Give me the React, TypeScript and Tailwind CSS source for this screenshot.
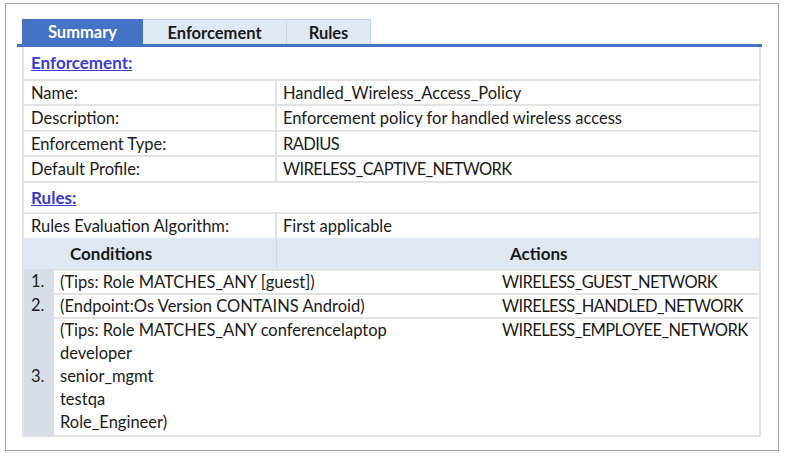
const font = { fontFamily: '"Lato", "Open Sans", sans-serif' };

const details = [
    ["Name:", "Handled_Wireless_Access_Policy"],
    ["Description:", "Enforcement policy for handled wireless access"],
    ["Enforcement Type:", "RADIUS"],
    ["Default Profile:", "WIRELESS_CAPTIVE_NETWORK"],
];

const rules = [
    { n: "1.", cond: ["(Tips: Role MATCHES_ANY [guest])"], action: "WIRELESS_GUEST_NETWORK", h: "h-[24px]" },
    { n: "2.", cond: ["(Endpoint:Os Version CONTAINS Android)"], action: "WIRELESS_HANDLED_NETWORK", h: "h-[24px]" },
    {
        n: "3.",
        cond: ["(Tips: Role MATCHES_ANY conferencelaptop", "developer", "senior_mgmt", "testqa", "Role_Engineer)"],
        action: "WIRELESS_EMPLOYEE_NETWORK",
        h: "h-[118px]",
    },
];

// caps in Lato run wider than the original font, so squeeze them a bit
const caps = (s: string) => (s === s.toUpperCase() ? "tracking-[-0.6px]" : "");

function KeyRow({ label, value, h }: { label: string; value: string; h: string }) {
    return (
        <div className={`grid grid-cols-[253px_1fr] border-t-2 border-[#e2e2e2] ${h}`}>
            <div className="flex items-center pl-[7px] border-r-2 border-[#e2e2e2]">{label}</div>
            <div className={`flex items-center pl-[6px] ${caps(value)}`}>{value}</div>
        </div>
    );
}

export default function App() {
    return (
        <div className="w-[787px] h-[461px] bg-white pt-[3px] pl-[5px] text-[16.5px] text-[#1a1a1a]" style={font}>
            <div className="w-[774px] h-[448px] border border-[#a3a3a3] pt-[15px] pl-[11px]">
                <div className="flex ml-[5px] h-[25px] font-bold">
                    <div className="w-[121px] bg-[#4472c4] text-white flex items-center justify-center pt-[2px]">Summary</div>
                    <div className="w-[144px] bg-[#dfe9f5] border-t border-r border-[#c7d3e3] flex items-center justify-center pt-[2px]">Enforcement</div>
                    <div className="w-[84px] bg-[#dfe9f5] border-t border-r border-[#c7d3e3] flex items-center justify-center pt-[2px]">Rules</div>
                </div>
                <div className="w-[745px] h-[3px] bg-[#4472c4]" />
                <div className="ml-[5px] w-[739px] border-l-2 border-r-2 border-b-2 border-[#e2e2e2]">
                    <div className="h-[32px] flex items-center pl-[7px]">
                        <span className="text-[17px] font-bold text-[#3a3ad4] underline">Enforcement:</span>
                    </div>
                    {details.map(([label, value], i) => (
                        <KeyRow key={label} label={label} value={value} h={i % 2 === 0 ? "h-[25px]" : "h-[26px]"} />
                    ))}
                    <div className="h-[31px] flex items-center pl-[7px] border-t-2 border-[#e2e2e2]">
                        <span className="text-[17px] font-bold text-[#3a3ad4] underline">Rules:</span>
                    </div>
                    <KeyRow label="Rules Evaluation Algorithm:" value="First applicable" h="h-[26px]" />
                    <div className="grid grid-cols-[253px_1fr] h-[31px] bg-[#dfe8f2] font-bold text-[17px]">
                        <div className="flex items-center pl-[46px] border-r border-[#cfd8e3]">Conditions</div>
                        <div className="flex items-center pl-[233px]">Actions</div>
                    </div>
                    {rules.map((r) => (
                        <div key={r.n} className={`flex ${r.h}`}>
                            <div className="w-[30px] shrink-0 bg-[#d7dee8] flex items-center pl-[7px]">{r.n}</div>
                            <div className="flex-1 grid grid-cols-[448px_1fr] border-t-2 border-[#e2e2e2]">
                                <div className="pl-[6px] leading-[23px]">
                                    {r.cond.map((c) => (
                                        <div key={c}>{c}</div>
                                    ))}
                                </div>
                                <div className="leading-[23px] tracking-[-0.6px]">{r.action}</div>
                            </div>
                        </div>
                    ))}
                </div>
            </div>
        </div>
    );
}
